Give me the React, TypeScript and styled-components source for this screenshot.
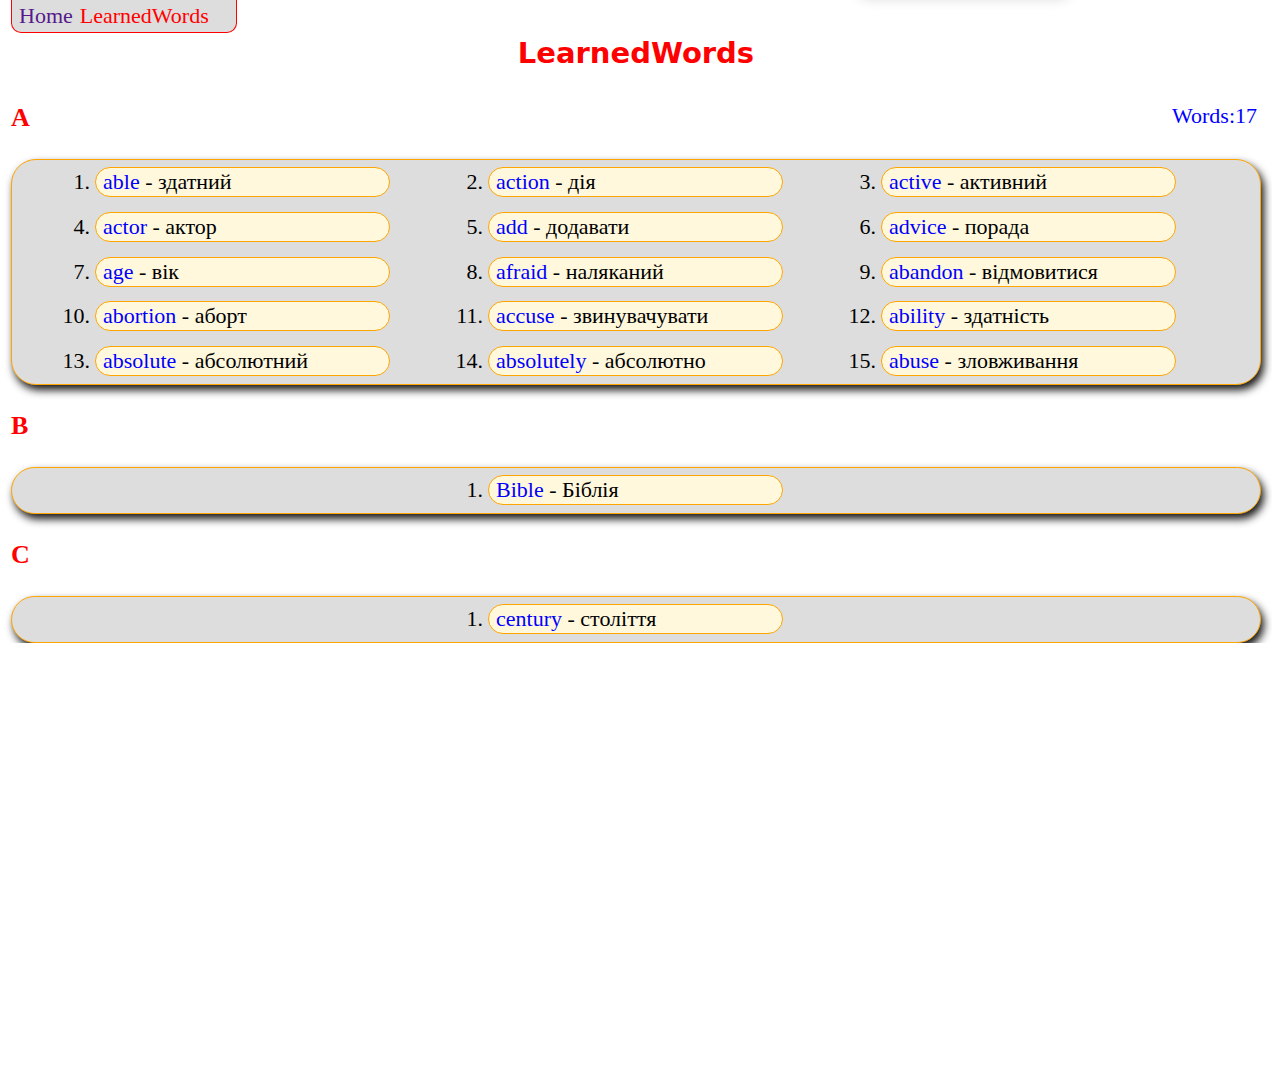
import React from "react";
import styled, { createGlobalStyle } from "styled-components";

const GlobalStyle = createGlobalStyle`
  html, body { margin: 0; padding: 0; background: #ffffff; }
  body { font-family: "Liberation Serif", "Times New Roman", serif; color: #000; }
`;

type Word = { en: string; uk: string };

const sections: { letter: string; words: Word[] }[] = [
  {
    letter: "A",
    words: [
      { en: "able", uk: "здатний" },
      { en: "action", uk: "дія" },
      { en: "active", uk: "активний" },
      { en: "actor", uk: "актор" },
      { en: "add", uk: "додавати" },
      { en: "advice", uk: "порада" },
      { en: "age", uk: "вік" },
      { en: "afraid", uk: "наляканий" },
      { en: "abandon", uk: "відмовитися" },
      { en: "abortion", uk: "аборт" },
      { en: "accuse", uk: "звинувачувати" },
      { en: "ability", uk: "здатність" },
      { en: "absolute", uk: "абсолютний" },
      { en: "absolutely", uk: "абсолютно" },
      { en: "abuse", uk: "зловживання" },
    ],
  },
  { letter: "B", words: [{ en: "Bible", uk: "Біблія" }] },
  { letter: "C", words: [{ en: "century", uk: "століття" }] },
];

const Page = styled.div`
  display: flex;
  flex-direction: column;
  padding: 0 11px;
`;

const Nav = styled.nav`
  align-self: flex-start;
  box-sizing: border-box;
  width: 226px;
  height: 33px;
  padding: 0 7px;
  display: flex;
  align-items: center;
  gap: 7px;
  background: #dddddd;
  border: 1px solid #ff0000;
  border-top: none;
  border-radius: 0 0 10px 10px;
  font-size: 22px;
  line-height: 28px;
`;

const NavLink = styled.a<{ $active?: boolean }>`
  color: ${(p) => (p.$active ? "#ff0000" : "#551a8b")};
  text-decoration: none;
`;

const Toast = styled.div`
  position: fixed;
  top: -60px;
  left: 858px;
  width: 212px;
  height: 60px;
  border-radius: 10px;
  box-shadow: 0 0 12px rgba(0, 0, 0, 0.12);
  background: #fff;
`;

const Title = styled.h1`
  margin: 0;
  height: 40px;
  text-align: center;
  font-family: "Comic Sans MS", "DejaVu Sans", sans-serif;
  font-weight: bold;
  font-size: 29px;
  line-height: 40px;
  color: #ff0000;
`;

const SectionHeader = styled.div<{ $first?: boolean }>`
  display: flex;
  justify-content: space-between;
  align-items: flex-start;
  margin-top: ${(p) => (p.$first ? "31px" : "27px")};
  margin-bottom: 27px;
  height: 28px;
`;

const Letter = styled.h2`
  margin: 0;
  font-size: 26px;
  line-height: 27px;
  font-weight: bold;
  color: #ff0000;
`;

const Count = styled.span`
  margin-right: 4px;
  margin-top: -2px;
  font-size: 22px;
  line-height: 28px;
  color: #0000ff;
`;

const Panel = styled.ol`
  list-style: none;
  margin: 0;
  padding: 7px 0 8px;
  display: flex;
  flex-wrap: wrap;
  justify-content: center;
  row-gap: 14.75px;
  background: #dddddd;
  border: 1px solid #ffa500;
  border-radius: 25px;
  box-shadow: 3px 5px 9px rgba(0, 0, 0, 0.92);
`;

const Item = styled.li`
  width: 393px;
  display: flex;
  align-items: center;
`;

const Num = styled.span`
  box-sizing: border-box;
  width: 48.5px;
  padding-right: 5px;
  text-align: right;
  font-size: 22px;
  line-height: 26px;
`;

const Pill = styled.span`
  box-sizing: border-box;
  width: 295px;
  height: 30px;
  padding: 1px 7px 0;
  background: #fff8dc;
  border: 1px solid #ffa500;
  border-radius: 15px;
  font-size: 22px;
  line-height: 26px;
  white-space: nowrap;
`;

const En = styled.span`
  color: #0000ff;
`;

export default function App() {
  const total = sections.reduce((n, s) => n + s.words.length, 0);
  return (
    <>
      <GlobalStyle />
      <Toast />
      <Page>
        <Nav>
          <NavLink href="#">Home</NavLink>
          <NavLink href="#" $active>
            LearnedWords
          </NavLink>
        </Nav>
        <Title>LearnedWords</Title>
        {sections.map((s, si) => (
          <React.Fragment key={s.letter}>
            <SectionHeader $first={si === 0}>
              <Letter>{s.letter}</Letter>
              {si === 0 && <Count>Words:{total}</Count>}
            </SectionHeader>
            <Panel>
              {s.words.map((w, i) => (
                <Item key={w.en}>
                  <Num>{i + 1}.</Num>
                  <Pill>
                    <En>{w.en}</En> - {w.uk}
                  </Pill>
                </Item>
              ))}
            </Panel>
          </React.Fragment>
        ))}
      </Page>
    </>
  );
}
